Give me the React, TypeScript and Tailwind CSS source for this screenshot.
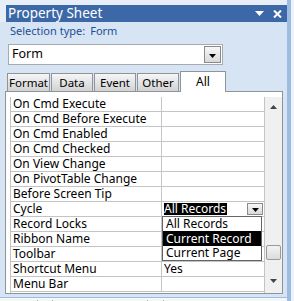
import React from 'react';

const rows = [
  { name: 'On Cmd Execute' },
  { name: 'On Cmd Before Execute' },
  { name: 'On Cmd Enabled' },
  { name: 'On Cmd Checked' },
  { name: 'On View Change' },
  { name: 'On PivotTable Change' },
  { name: 'Before Screen Tip' },
  { name: 'Cycle', cycle: true },
  { name: 'Record Locks' },
  { name: 'Ribbon Name' },
  { name: 'Toolbar' },
  { name: 'Shortcut Menu', value: 'Yes' },
  { name: 'Menu Bar' },
];

const tabs = ['Format', 'Data', 'Event', 'Other'];

function DropButton({ className }: { className: string }) {
  return (
    <div className={`flex items-end justify-center border border-[#8a8a8a] bg-gradient-to-b from-[#f7f7f7] to-[#d9d9d9] ${className}`}>
      <svg width="7" height="4" viewBox="0 0 7 4">
        <path d="M0 0h7L3.5 4z" fill="#000" />
      </svg>
    </div>
  );
}

export default function App() {
  return (
    <div
      className="w-[294px] h-[301px] bg-[#d6e4f4] overflow-hidden flex flex-col text-black"
      style={{ fontFamily: '"Noto Sans", sans-serif' }}
    >
      {/* Top frame */}
      <div className="h-[5px] flex shrink-0">
        <div className="flex-1 bg-[#e7eef7]" />
        <div className="w-[4px] bg-[#9dbce4]" />
        <div className="w-[3px] bg-[#eef2f7]" />
      </div>

      {/* Title bar */}
      <div className="h-[17px] flex shrink-0">
        <div className="w-[6px] bg-[#e7eef7]" />
        <div className="flex-1 bg-[#3c68a8] flex items-center pl-[2px] pr-[5px]">
          <span className="text-white text-[13.5px] leading-none">Property Sheet</span>
          <div className="ml-auto flex items-center gap-[9px]">
            <svg width="9" height="5" viewBox="0 0 9 5">
              <path d="M0 0h9L4.5 5z" fill="#fff" />
            </svg>
            <svg width="9" height="8" viewBox="0 0 9 8">
              <path d="M1 0.5l7 7M8 0.5l-7 7" stroke="#fff" strokeWidth="2" />
            </svg>
          </div>
        </div>
        <div className="w-[4px] bg-[#9dbce4]" />
        <div className="w-[3px] bg-[#eef2f7]" />
      </div>

      <div className="flex-1 flex">
        <div className="flex-1 flex flex-col">
          {/* Selection type */}
          <div className="pl-[10px] h-[18px] flex items-center text-[11px] text-[#1d4f95]">
            <span>Selection type:</span>
            <span className="ml-[5px]">Form</span>
          </div>

          {/* Object selector */}
          <div className="ml-[8px] mt-[4px] w-[215px] h-[21px] bg-white border border-[#a7abb0] flex items-center pl-[3px] pr-[1px]">
            <span className="text-[12.5px]">Form</span>
            <DropButton className="ml-auto w-[17px] h-[17px] pb-[4px]" />
          </div>

          {/* Tabs */}
          <div className="mt-[5px] flex items-end pl-[7px] h-[21px] relative z-10">
            {tabs.map((t) => (
              <div
                key={t}
                className="h-[18px] mr-[1px] border border-b-0 border-[#8f939a] bg-gradient-to-b from-[#f6f6f6] to-[#d2d2d2] flex items-center justify-center text-[11.5px] leading-none"
                style={{ width: t === 'Format' ? 43 : 42 }}
              >
                {t}
              </div>
            ))}
            <div className="w-[46px] h-[21px] -mb-[1px] border border-b-0 border-[#8f939a] bg-white flex items-start justify-center pt-[2px] text-[12px] leading-[16px]">
              All
            </div>
          </div>

          {/* Content box */}
          <div className="ml-[5px] w-[278px] h-[203px] bg-white border border-[#8f939a] pt-[5px] pl-[4px] flex">
            <div className="w-[255px] border-l border-[#c4c4c4]">
              {rows.map((r) => (
                <div key={r.name} className="h-[15px] flex items-center border-b border-[#c4c4c4] text-[12px] leading-[14px]">
                  <div className="w-[151px] h-full pl-[2px] border-r border-[#c4c4c4] whitespace-nowrap">
                    {r.name}
                  </div>
                  <div className="flex-1 h-full pl-[2px] relative flex">
                    {r.cycle && (
                      <>
                        <div className="mt-[1px] h-[12px] bg-black text-white leading-[12px] pr-[1px]">All Records</div>
                        <DropButton className="ml-auto mt-[1px] mr-[1px] w-[16px] h-[12px] pb-[2px]" />
                        <div className="absolute left-0 top-[14px] w-[100px] h-[45px] bg-white border border-[#646464] z-20 flex flex-col">
                          <div className="h-[14px] pl-[3px] leading-[14px]">All Records</div>
                          <div className="h-[15px] pl-[3px] leading-[15px] bg-black text-white">Current Record</div>
                          <div className="h-[14px] pl-[3px] leading-[14px]">Current Page</div>
                        </div>
                      </>
                    )}
                    {r.value && <span>{r.value}</span>}
                  </div>
                </div>
              ))}
            </div>
            {/* Scrollbar */}
            <div className="w-[18px] h-full border-l border-[#c4c4c4] bg-[#f0f0f0] flex flex-col items-center relative">
              <svg className="mt-[8px]" width="7" height="4" viewBox="0 0 7 4">
                <path d="M3.5 0L7 4H0z" fill="#444" />
              </svg>
              <div className="absolute left-[1px] top-[148px] w-[15px] h-[15px] border border-[#9a9a9a] rounded-[2px] bg-gradient-to-b from-[#f3f3f3] to-[#dcdcdc]" />
              <svg className="mt-auto mb-[10px]" width="7" height="4" viewBox="0 0 7 4">
                <path d="M0 0h7L3.5 4z" fill="#444" />
              </svg>
            </div>
          </div>
          <div className="h-[3px]" />
          <div className="h-[1px] bg-[#9dbce4]" />
          <div className="flex-1 bg-[#f4f6f9] relative">
            {[37, 52, 147, 163].map((x) => (
              <div key={x} className="absolute top-[2px] w-[1px] h-[2px] bg-[#b0b0b0]" style={{ left: x }} />
            ))}
          </div>
        </div>
        <div className="w-[4px] bg-[#9dbce4]" />
        <div className="w-[3px] bg-[#eef2f7]" />
      </div>
    </div>
  );
}
